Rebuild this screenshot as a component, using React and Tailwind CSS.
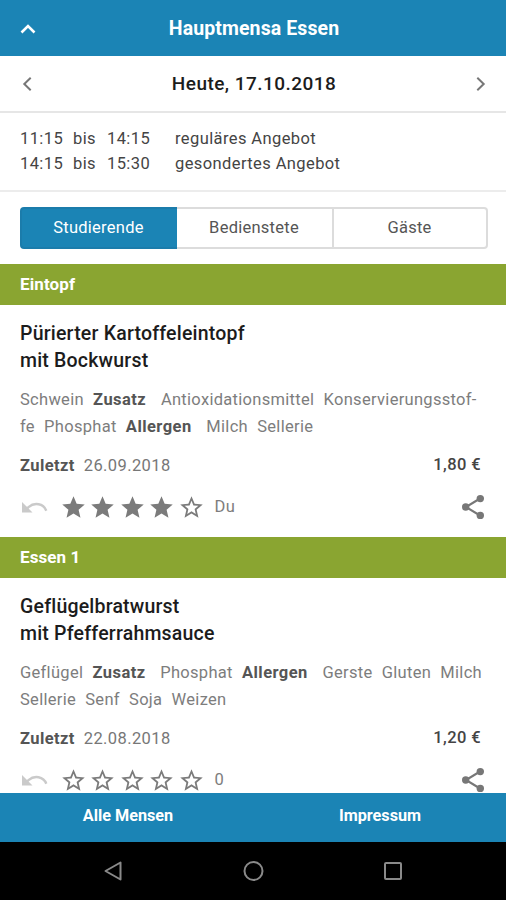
import React, { useState } from 'react';
import { MdStar, MdStarBorder } from 'react-icons/md';

const tabs = ['Studierende', 'Bedienstete', 'Gäste'];

const times = [
  { from: '11:15', to: '14:15', label: 'reguläres Angebot' },
  { from: '14:15', to: '15:30', label: 'gesondertes Angebot' },
];

const meals = [
  {
    category: 'Eintopf',
    title: ['Pürierter Kartoffeleintopf', 'mit Bockwurst'],
    info: [
      ['Schwein', '*Zusatz', 'Antioxidationsmittel', 'Konservierungsstof-'],
      ['fe', 'Phosphat', '*Allergen', 'Milch', 'Sellerie'],
    ],
    last: '26.09.2018',
    price: '1,80 €',
    stars: 4,
    votes: 'Du',
  },
  {
    category: 'Essen 1',
    title: ['Geflügelbratwurst', 'mit Pfefferrahmsauce'],
    info: [
      ['Geflügel', '*Zusatz', 'Phosphat', '*Allergen', 'Gerste', 'Gluten', 'Milch'],
      ['Sellerie', 'Senf', 'Soja', 'Weizen'],
    ],
    last: '22.08.2018',
    price: '1,20 €',
    stars: 0,
    votes: '0',
  },
];

const Chevron = ({ d, className, width = 2 }) => (
  <svg width="16" height="16" viewBox="0 0 16 16" fill="none" stroke="currentColor" strokeWidth={width} className={className}>
    <path d={d} />
  </svg>
);

const UndoIcon = () => (
  <svg width="26" height="12" viewBox="0 0 26 12" fill="none" stroke="currentColor" strokeWidth="2.4">
    <path d="M0 1v10.400h10.500z" fill="currentColor" stroke="none" />
    <path d="M4 8.500l2.500-2.400C12.500 1 21.500 2.500 24.300 9.800" />
  </svg>
);

const ShareIcon = () => (
  <svg width="24" height="26" viewBox="0 0 24 26" fill="currentColor" className="ml-auto text-[#777]">
    <path d="M19 4.500L5 13l14 8.500" fill="none" stroke="currentColor" strokeWidth="2.100" />
    <circle cx="19.300" cy="4.600" r="3.700" />
    <circle cx="4.700" cy="13" r="3.700" />
    <circle cx="19.300" cy="21.400" r="3.700" />
  </svg>
);

const Rating = ({ value, onChange }) => (
  <div className="flex gap-[2.5px]">
    {[1, 2, 3, 4, 5].map((n) => (
      <button key={n} onClick={() => onChange(n)} className="text-[#7b7b7b]">
        {n <= value ? <MdStar size={27} /> : <MdStarBorder size={27} />}
      </button>
    ))}
  </div>
);

const Meal = ({ meal }) => {
  const [stars, setStars] = useState(meal.stars);

  return (
    <section className="h-[273px] shrink-0">
      <h2 className="h-[41px] px-5 bg-[#8aa531] text-white text-[17px] leading-[40px] font-bold tracking-[0.1px]">{meal.category}</h2>
      <div className="pl-5 pr-[25px] pt-[15px]">
        <h3 className="text-[19.5px] leading-[27px] font-medium tracking-[0.2px] text-[#1c1c1c]">
          {meal.title.map((line) => (
            <div key={line}>{line}</div>
          ))}
        </h3>

        {/* Additives and allergens */}
        <div className="mt-3 text-[16.5px] leading-[27px] tracking-[0.3px] text-[#7d7d7d] whitespace-nowrap">
          {meal.info.map((line, i) => (
            <div key={i} className="flex gap-[9.2px]">
              {line.map((word) =>
                word.startsWith('*') ? (
                  <b key={word} className="mr-[5.5px] font-bold tracking-[0.45px] text-[#555]">{word.slice(1)}</b>
                ) : (
                  <span key={word}>{word}</span>
                )
              )}
            </div>
          ))}
        </div>

        <div className="mt-3 flex justify-between text-[16.5px] leading-[27px] tracking-[0.4px] text-[#777]">
          <div className="flex gap-[9px]">
            <b className="font-bold text-[#555]">Zuletzt</b>
            <span>{meal.last}</span>
          </div>
          <span className="-mt-px font-medium text-[#444]">{meal.price}</span>
        </div>

        <div className="mt-[13px] -mr-[4px] flex h-[30px] items-center">
          <button onClick={() => setStars(0)} className="w-[39.5px] pl-[2px] text-[#cacaca]">
            <UndoIcon />
          </button>
          <Rating value={stars} onChange={setStars} />
          <span className="ml-[10px] text-[16.5px] tracking-[0.3px] text-[#7d7d7d]">{meal.votes}</span>
          <ShareIcon />
        </div>
      </div>
    </section>
  );
};

const App = () => {
  const [active, setActive] = useState(0);

  return (
    <div className="flex h-[900px] w-[506px] flex-col overflow-hidden bg-white font-[Roboto,sans-serif]">
      <header className="flex h-14 shrink-0 items-center justify-between bg-[#1b84b5] px-5 pt-px text-white">
        <Chevron d="M1.500 11.500L8 5l6.500 6.500" width={2.6} />
        <h1 className="text-[19.5px] font-bold tracking-[0.1px]">Hauptmensa Essen</h1>
        <div className="w-[14px]" />
      </header>

      <div className="flex h-[57px] shrink-0 items-center justify-between border-b-2 border-[#e6e6e6] pt-px pr-[18px] pl-5">
        <Chevron d="M10.700 1.800L4.300 8l6.400 6.200" className="text-[#777]" />
        <span className="text-[19px] font-medium tracking-[0.45px] text-[#1c1c1c]">Heute, 17.10.2018</span>
        <Chevron d="M5.300 1.800L11.700 8l-6.400 6.200" className="text-[#777]" />
      </div>

      <div className="h-[79px] shrink-0 border-b-2 border-[#ececec] px-5 pt-[13px] text-[16.5px] leading-[25px] tracking-[0.4px] text-[#444]">
        {times.map((t) => (
          <div key={t.from} className="flex">
            <span className="w-[53px]">{t.from}</span>
            <span className="w-[34px]">bis</span>
            <span className="w-[68px]">{t.to}</span>
            <span>{t.label}</span>
          </div>
        ))}
      </div>

      <div className="shrink-0 pt-[15px] pr-[18px] pb-[15px] pl-5">
        <div className="flex h-[42px]">
          {tabs.map((tab, i) => (
            <button
              key={tab}
              onClick={() => setActive(i)}
              className={`w-[155px] border-2 pr-px text-[16.5px] tracking-[0.25px] first:w-[157px] first:rounded-l-[4px] first:pr-[2px] last:w-[156px] last:rounded-r-[4px] not-last:border-r-0 ${active === i ? 'border-[#1b7cab] bg-[#1b84b5] text-white' : 'border-[#dcdcdc] text-[#555]'} ${active === i - 1 ? 'border-l-0' : ''}`}
            >
              {tab}
            </button>
          ))}
        </div>
      </div>

      <main className="flex min-h-0 flex-1 flex-col overflow-hidden">
        {meals.map((meal) => (
          <Meal key={meal.category} meal={meal} />
        ))}
      </main>

      <footer className="grid h-[49px] shrink-0 grid-cols-2 bg-[#1b84b5] pl-[2px] text-center text-[16.2px] leading-[46px] font-bold text-white">
        <span>Alle Mensen</span>
        <span>Impressum</span>
      </footer>

      {/* Android navigation bar */}
      <nav className="flex h-[58px] shrink-0 items-center justify-center gap-[118px] bg-black">
        <svg width="22" height="22" viewBox="0 0 22 22" fill="none" stroke="#8a8a8a" strokeWidth="2" strokeLinejoin="round">
          <path d="M18.500 2.500v17L3.500 11z" />
        </svg>
        <svg width="22" height="22" viewBox="0 0 22 22" fill="none" stroke="#8a8a8a" strokeWidth="2">
          <circle cx="11.500" cy="11" r="9" />
        </svg>
        <svg width="22" height="22" viewBox="0 0 22 22" fill="none" stroke="#8a8a8a" strokeWidth="2">
          <rect x="3" y="3" width="16" height="16" rx="1" />
        </svg>
      </nav>
    </div>
  );
};

export default App;
